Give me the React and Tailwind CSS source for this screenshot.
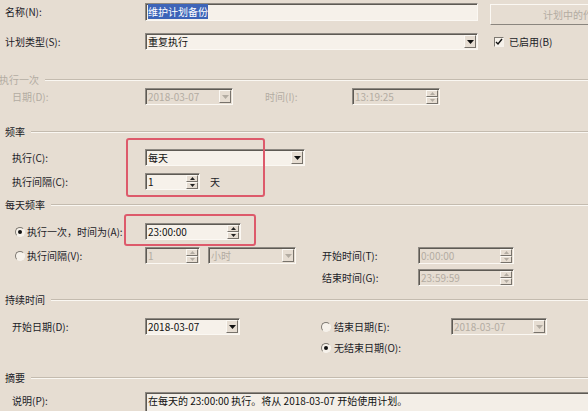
import React from "react";

function Tri({ disabled }) {
  return (
    <svg width="7" height="4" viewBox="0 0 7 4">
      <path d="M0 0h7L3.5 4z" fill={disabled ? "#b3aca2" : "#111"} />
    </svg>
  );
}
function TriUp({ disabled }) {
  return (
    <svg width="5" height="3" viewBox="0 0 5 3">
      <path d="M0 3h5L2.5 0z" fill={disabled ? "#b3aca2" : "#222"} />
    </svg>
  );
}
function TriDown({ disabled }) {
  return (
    <svg width="5" height="3" viewBox="0 0 5 3">
      <path d="M0 0h5L2.5 3z" fill={disabled ? "#b3aca2" : "#222"} />
    </svg>
  );
}

function Box({ cls, disabled, children, right }) {
  return (
    <div
      className={`${cls} shrink-0 h-full flex items-center border border-t-[#8e8982] border-l-[#8e8982] border-r-[#fbf8f3] border-b-[#fbf8f3] shadow-[inset_1px_1px_0_#5e5a54] ${
        disabled ? "bg-[#e6ddd2] text-[#b3aca2]" : "bg-[#f6f1ea] text-[#111]"
      }`}
    >
      <div className="flex-1 min-w-0 pl-[2px] whitespace-nowrap leading-[14px]">{children}</div>
      {right}
    </div>
  );
}

function Combo({ cls, disabled, children }) {
  return (
    <Box
      cls={cls}
      disabled={disabled}
      right={
        <div className="w-[12px] h-[13px] shrink-0 mr-[1px] bg-[#e6ddd2] border border-t-[#fbf8f3] border-l-[#fbf8f3] border-b-[#77726b] border-r-[#77726b] flex items-center justify-center">
          <Tri disabled={disabled} />
        </div>
      }
    >
      {children}
    </Box>
  );
}

function Spin({ cls, disabled, children }) {
  return (
    <Box
      cls={cls}
      disabled={disabled}
      right={
        <div className="flex flex-col shrink-0 mr-[1px]">
          <div className="w-[12px] h-[7px] bg-[#e6ddd2] border border-t-[#fbf8f3] border-l-[#fbf8f3] border-b-[#77726b] border-r-[#77726b] flex items-center justify-center">
            <TriUp disabled={disabled} />
          </div>
          <div className="w-[12px] h-[7px] bg-[#e6ddd2] border border-t-[#fbf8f3] border-l-[#fbf8f3] border-b-[#77726b] border-r-[#77726b] flex items-center justify-center">
            <TriDown disabled={disabled} />
          </div>
        </div>
      }
    >
      {children}
    </Box>
  );
}

function Radio({ checked }) {
  return (
    <div className="w-[10px] h-[10px] shrink-0 rounded-full border border-t-[#7e7972] border-l-[#7e7972] border-r-[#f6f2ec] border-b-[#f6f2ec] bg-[#f6f1ea] flex items-center justify-center">
      {checked && <div className="w-[4px] h-[4px] rounded-full bg-[#111]" />}
    </div>
  );
}

function Header({ children, cls, disabled }) {
  return (
    <div className={`flex items-center h-[12px] ${cls}`}>
      <span className={disabled ? "text-[#b3aca2]" : ""}>{children}</span>
      <div className="flex-1 ml-[6px] h-0 border-t border-t-[#c4bbaf] border-b border-b-[#faf7f2]" />
    </div>
  );
}

export default function App() {
  return (
    <div className="relative w-[588px] h-[411px] overflow-hidden bg-[#e6ddd2] text-[10px] leading-[12px] text-[#1c1c28] font-['Noto_Sans_CJK_SC','Noto_Sans',sans-serif] pt-[3px]">
      {/* Row 1 */}
      <div className="flex items-start h-[18px]">
        <div className="w-[145px] shrink-0 pl-[5px] self-center">名称(N):</div>
        <Box cls="w-[333px]">
          <span className="bg-[#3d64b8] text-white">维护计划备份</span>
        </Box>
        <div className="ml-[12px] mt-[1px] w-[130px] h-[21px] shrink-0 flex items-center pl-[52px] text-[#b3aca2] border border-t-[#fbf8f3] border-l-[#fbf8f3] border-b-[#8a857e] border-r-[#8a857e] whitespace-nowrap">
          计划中的作业
        </div>
      </div>

      {/* Row 2 */}
      <div className="flex items-center h-[17px] mt-[12px]">
        <div className="w-[145px] shrink-0 pl-[5px]">计划类型(S):</div>
        <Combo cls="w-[333px]">重复执行</Combo>
        <div className="ml-[16px] w-[10px] h-[10px] shrink-0 border border-t-[#7e7972] border-l-[#7e7972] border-r-[#f6f2ec] border-b-[#f6f2ec] bg-[#f6f1ea] flex items-center justify-center">
          <svg width="8" height="8" viewBox="0 0 8 8">
            <path d="M1 4l2 2 4-5" stroke="#111" strokeWidth="1.4" fill="none" />
          </svg>
        </div>
        <div className="ml-[5px]">已启用(B)</div>
      </div>

      {/* 执行一次 */}
      <Header cls="mt-[24px] -ml-[1px]" disabled>
        执行一次
      </Header>
      <div className="flex items-center h-[17px] mt-[2px] text-[#b3aca2]">
        <div className="w-[145px] shrink-0 pl-[12px]">日期(D):</div>
        <Combo cls="w-[88px]" disabled>
          2018-03-07
        </Combo>
        <div className="ml-[32px] w-[87px] shrink-0">时间(I):</div>
        <Spin cls="w-[88px]" disabled>
          13:19:25
        </Spin>
      </div>

      {/* 频率 */}
      <Header cls="mt-[21px] pl-[5px]">频率</Header>
      <div className="flex items-center h-[17px] mt-[11px]">
        <div className="w-[145px] shrink-0 pl-[12px]">执行(C):</div>
        <Combo cls="w-[160px]">每天</Combo>
      </div>
      <div className="flex items-center h-[17px] mt-[7px]">
        <div className="w-[145px] shrink-0 pl-[12px]">执行间隔(C):</div>
        <Spin cls="w-[55px]">1</Spin>
        <div className="ml-[10px]">天</div>
      </div>

      {/* 每天频率 */}
      <Header cls="mt-[9px] pl-[5px]">每天频率</Header>
      <div className="flex items-center h-[17px] mt-[12px]">
        <div className="w-[145px] shrink-0 pl-[15px] flex items-center gap-[2px]">
          <Radio checked />
          <span>执行一次，时间为(A):</span>
        </div>
        <Spin cls="w-[96px]">23:00:00</Spin>
      </div>
      <div className="flex items-center h-[17px] mt-[7px]">
        <div className="w-[145px] shrink-0 pl-[15px] flex items-center gap-[2px]">
          <Radio />
          <span>执行间隔(V):</span>
        </div>
        <Spin cls="w-[55px]" disabled>
          1
        </Spin>
        <Combo cls="w-[88px] ml-[8px]" disabled>
          小时
        </Combo>
        <div className="ml-[26px] w-[96px] shrink-0">开始时间(T):</div>
        <Spin cls="w-[96px]" disabled>
          0:00:00
        </Spin>
      </div>
      <div className="flex items-center h-[17px] mt-[5px]">
        <div className="w-[322px] shrink-0" />
        <div className="w-[96px] shrink-0">结束时间(G):</div>
        <Spin cls="w-[96px]" disabled>
          23:59:59
        </Spin>
      </div>

      {/* 持续时间 */}
      <Header cls="mt-[8px] pl-[5px]">持续时间</Header>
      <div className="flex items-center h-[17px] mt-[12px]">
        <div className="w-[145px] shrink-0 pl-[12px]">开始日期(D):</div>
        <Combo cls="w-[95px]">2018-03-07</Combo>
        <div className="ml-[81px] w-[130px] shrink-0 flex items-center gap-[3px]">
          <Radio />
          <span>结束日期(E):</span>
        </div>
        <Combo cls="w-[96px]" disabled>
          2018-03-07
        </Combo>
      </div>
      <div className="flex items-center h-[16px] mt-[5px] pl-[321px]">
        <Radio checked />
        <span className="ml-[3px]">无结束日期(O):</span>
      </div>

      {/* 摘要 */}
      <Header cls="mt-[16px] pl-[5px]">摘要</Header>
      <div className="flex items-start h-[20px] mt-[8px]">
        <div className="w-[145px] shrink-0 pl-[12px] pt-[3px]">说明(P):</div>
        <div className="w-[460px] shrink-0 h-[20px] pt-[2px] pl-[2px] bg-[#f3eee7] border border-t-[#8e8982] border-l-[#8e8982] shadow-[inset_1px_1px_0_#5e5a54] whitespace-nowrap text-[#111]">
          在每天的 23:00:00 执行。将从 2018-03-07 开始使用计划。
        </div>
      </div>

      {/* annotation boxes */}
      <div className="absolute left-[126px] top-[138px] w-[139px] h-[59px] border-2 border-[#dd5a6b] rounded-[3px] pointer-events-none" />
      <div className="absolute left-[124px] top-[214px] w-[132px] h-[32px] border-2 border-[#dd5a6b] rounded-[3px] pointer-events-none" />
    </div>
  );
}
